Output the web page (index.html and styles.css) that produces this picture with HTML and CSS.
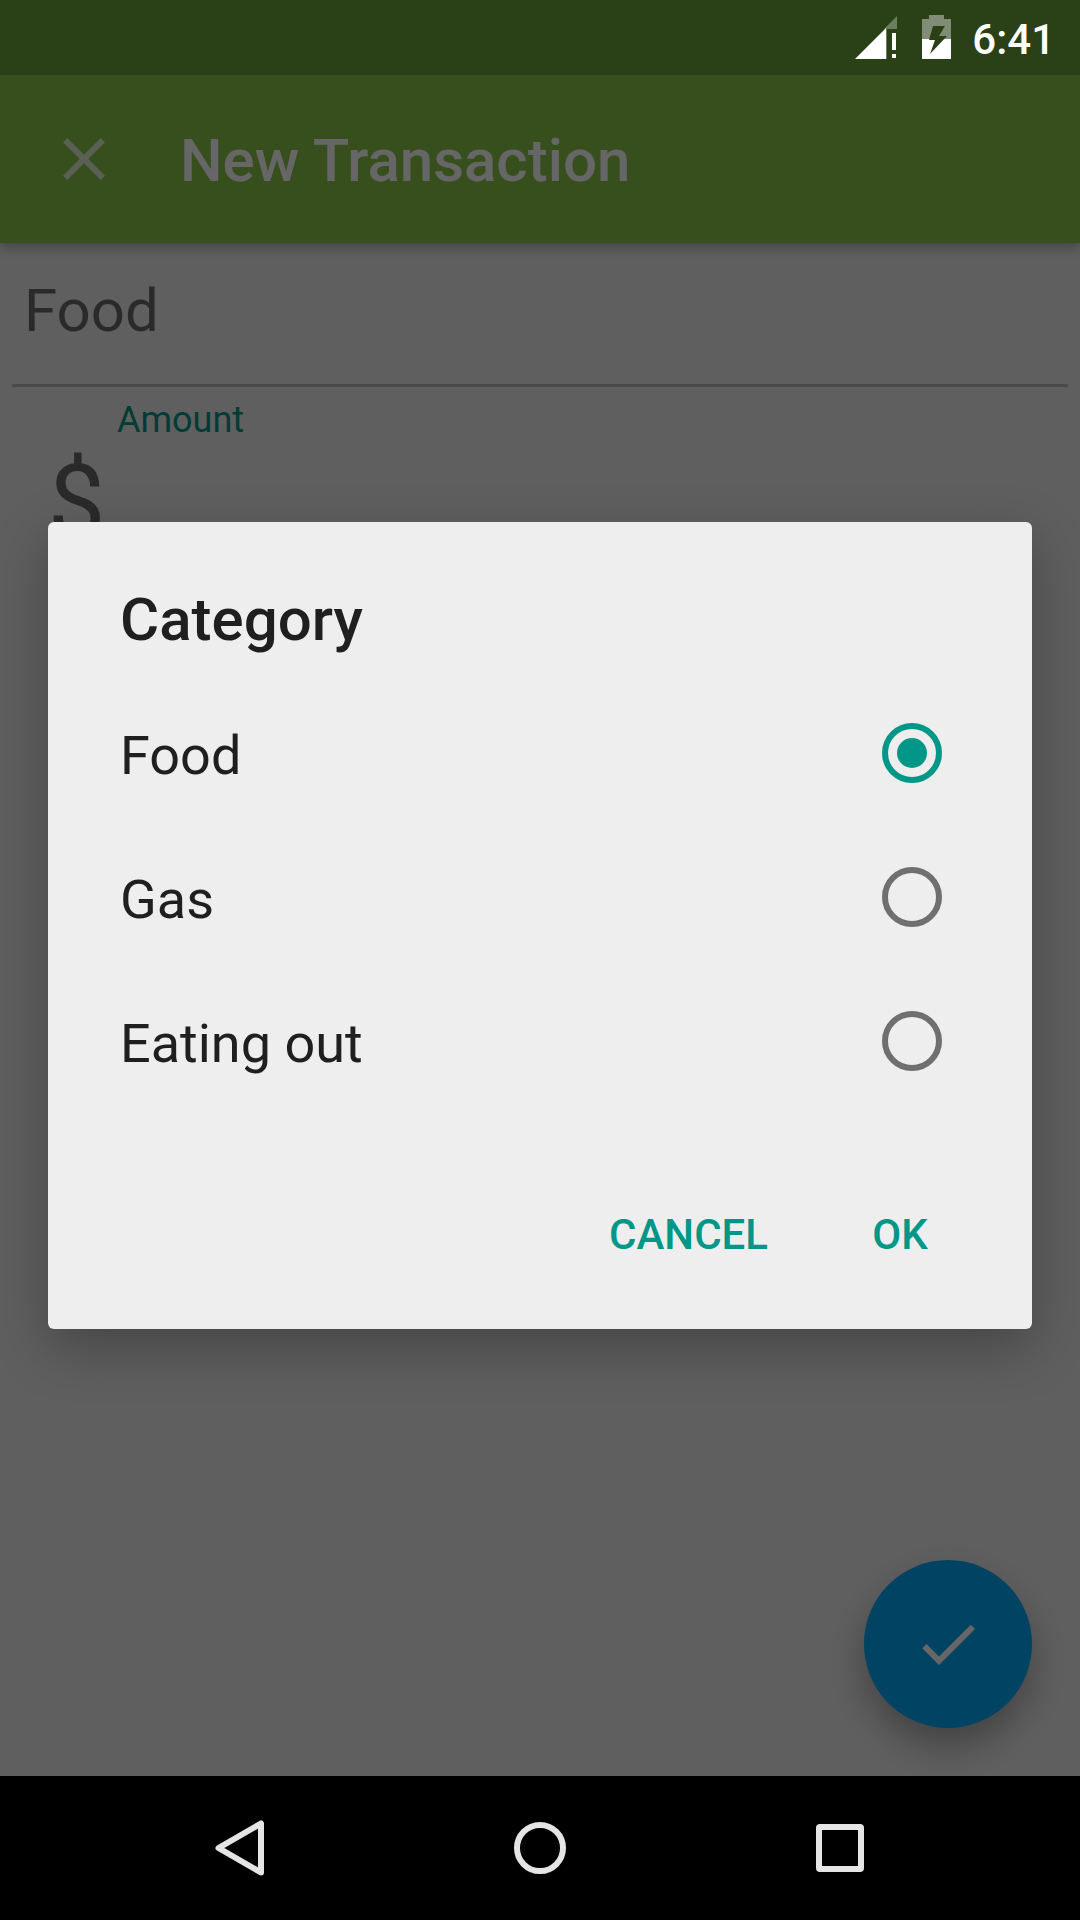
FILE: index.html
```html
<!DOCTYPE html>
<html lang="en">
<head>
<meta charset="utf-8">
<meta name="viewport" content="width=device-width, initial-scale=1">
<title>New Transaction</title>
<link rel="stylesheet" href="styles.css">
</head>
<body>
<div class="screen">
  <div class="status-bar">
    <svg class="status-icon" width="48" height="48" viewBox="0 0 48 48" aria-hidden="true">
      <path fill="#6c7e60" d="M45 2V15H35V45H33V14z"/>
      <path fill="#fff" d="M3 45 34 14V45z"/>
      <path fill="#fff" d="M40 19h4v17h-4zM40 40h4v4h-4z"/>
    </svg>
    <svg class="status-icon" width="30" height="48" viewBox="0 0 30 48" aria-hidden="true">
      <path fill="#808d74" d="M8 1h15v4h7v20H1V5h7z"/>
      <path fill="#fff" d="M1 25h29v20H1z"/>
      <path fill="#2a4016" d="M12 12h12l-6 10h8L9 40l5-14H8z"/>
    </svg>
    <span class="clock">6:41</span>
  </div>

  <div class="page">
    <header class="toolbar">
      <button class="icon-button" type="button" aria-label="Close">
        <svg width="72" height="72" viewBox="0 0 24 24" aria-hidden="true"><path fill="currentColor" d="M19 6.41 17.59 5 12 10.59 6.41 5 5 6.41 10.59 12 5 17.59 6.41 19 12 13.41 17.59 19 19 17.59 13.41 12z"/></svg>
      </button>
      <h1 class="toolbar-title">New Transaction</h1>
    </header>
    <main class="form">
      <button class="category-field" type="button">Food</button>
      <div class="amount-field">
        <label class="amount-label" for="amount">Amount</label>
        <span class="currency">$</span>
        <input class="amount-input" id="amount" type="text" inputmode="decimal">
      </div>
      <button class="fab" type="button" aria-label="Save">
        <svg width="72" height="72" viewBox="0 0 24 24" aria-hidden="true"><path fill="currentColor" d="M9 16.17 4.83 12l-1.42 1.41L9 19 21 7l-1.41-1.41z"/></svg>
      </button>
    </main>
  </div>

  <nav class="nav-bar">
    <button class="nav-button" type="button" aria-label="Back">
      <svg width="72" height="72" viewBox="0 0 72 72" aria-hidden="true"><path d="M57 11.500V60.500L14.500 36z"/></svg>
    </button>
    <button class="nav-button" type="button" aria-label="Home">
      <svg width="72" height="72" viewBox="0 0 72 72" aria-hidden="true"><circle cx="36" cy="36" r="23"/></svg>
    </button>
    <button class="nav-button" type="button" aria-label="Recent apps">
      <svg width="72" height="72" viewBox="0 0 72 72" aria-hidden="true"><rect x="15" y="15" width="42" height="42" rx="1"/></svg>
    </button>
  </nav>

  <div class="scrim">
    <form class="dialog" role="dialog" aria-labelledby="dialog-title">
      <h2 class="dialog-title" id="dialog-title">Category</h2>
      <div class="options">
        <label class="option"><span class="option-text">Food</span><input class="radio" type="radio" name="category" checked></label>
        <label class="option"><span class="option-text">Gas</span><input class="radio" type="radio" name="category"></label>
        <label class="option"><span class="option-text">Eating out</span><input class="radio" type="radio" name="category"></label>
      </div>
      <div class="actions">
        <button class="action" type="button">CANCEL</button>
        <button class="action" type="button">OK</button>
      </div>
    </form>
  </div>
</div>
</body>
</html>
```

FILE: styles.css
```css
* {
  box-sizing: border-box;
}

body {
  margin: 0;
  font-family: Roboto, sans-serif;
  background: #000;
}

button,
input {
  margin: 0;
  padding: 0;
  border: 0;
  background: none;
  font: inherit;
  color: inherit;
}

svg {
  display: block;
}

.screen {
  position: relative;
  display: flex;
  flex-direction: column;
  min-height: 100vh;
}

/* System status bar stays bright above the scrim */
.status-bar {
  position: relative;
  z-index: 2;
  display: flex;
  justify-content: flex-end;
  align-items: center;
  gap: 21px;
  height: 75px;
  padding-right: 25px;
  background: #2a4016;
}

.clock {
  padding-top: 4px;
  font-size: 42px;
  font-weight: 500;
  line-height: 48px;
  color: #fff;
}

.page {
  flex: 1;
  display: flex;
  flex-direction: column;
  background: #eee;
}

.toolbar {
  position: relative;
  display: flex;
  align-items: center;
  gap: 60px;
  height: 168px;
  padding: 0 48px;
  background: #8bc34a;
  box-shadow: 0 4px 12px rgba(0, 0, 0, 0.3);
  color: #fff;
}

.icon-button {
  opacity: 0.75;
}

.toolbar-title {
  margin: 0;
  padding-top: 4px;
  font-size: 60px;
  font-weight: 500;
  line-height: 72px;
}

.form {
  position: relative;
  flex: 1;
  padding: 0 12px;
  color: #696969;
}

.category-field {
  display: block;
  width: 100%;
  height: 144px;
  padding: 0 12px 6px;
  border-bottom: 3px solid #b9b9b9;
  font-size: 60px;
  line-height: 72px;
  text-align: left;
}

.amount-field {
  display: grid;
  grid-template-columns: 57px 1fr;
  column-gap: 12px;
  padding: 12px 12px 0 36px;
}

.amount-label {
  grid-column: 2;
  font-size: 36px;
  line-height: 43px;
  color: #009688;
}

.currency {
  grid-column: 1;
  font-size: 102px;
  line-height: 120px;
}

.amount-input {
  width: 100%;
  font-size: 102px;
  line-height: 120px;
}

.fab {
  position: absolute;
  right: 48px;
  bottom: 48px;
  display: grid;
  place-items: center;
  width: 168px;
  height: 168px;
  border-radius: 50%;
  background: #03a9f4;
  box-shadow: 0 18px 36px rgba(0, 0, 0, 0.3);
  color: #fff;
}

.nav-bar {
  position: relative;
  z-index: 2;
  display: flex;
  justify-content: center;
  align-items: center;
  gap: 60px;
  height: 144px;
  background: #000;
}

.nav-button {
  display: grid;
  place-items: center;
  width: 240px;
  height: 144px;
}

.nav-button svg {
  fill: none;
  stroke: #e5e5e5;
  stroke-width: 6;
  stroke-linejoin: round;
}

.scrim {
  position: absolute;
  inset: 0;
  z-index: 1;
  display: grid;
  align-items: center;
  padding: 75px 48px 144px;
  background: rgba(0, 0, 0, 0.6);
}

.dialog {
  padding: 56px 36px 41px;
  border-radius: 6px;
  background: #eee;
  box-shadow: 0 18px 54px rgba(0, 0, 0, 0.27);
  color: #1f1f1f;
}

.dialog-title {
  margin: 0 0 19px;
  padding: 0 36px;
  font-size: 60px;
  font-weight: 500;
  line-height: 84px;
}

.options {
  padding: 0 54px 0 36px;
}

.option {
  display: flex;
  justify-content: space-between;
  align-items: center;
  height: 144px;
}

.option-text {
  padding-top: 6px;
  font-size: 54px;
  line-height: 64px;
}

.radio {
  appearance: none;
  display: grid;
  place-items: center;
  width: 60px;
  height: 60px;
  border: 6px solid #6f6f6f;
  border-radius: 50%;
}

.radio:checked {
  border-color: #009688;
}

.radio:checked::before {
  content: "";
  width: 30px;
  height: 30px;
  border-radius: 50%;
  background: #009688;
}

.actions {
  display: flex;
  justify-content: flex-end;
  gap: 12px;
  padding-top: 67px;
}

.action {
  min-width: 192px;
  height: 108px;
  padding: 0 24px;
  font-size: 42px;
  font-weight: 500;
  color: #009688;
}
```
